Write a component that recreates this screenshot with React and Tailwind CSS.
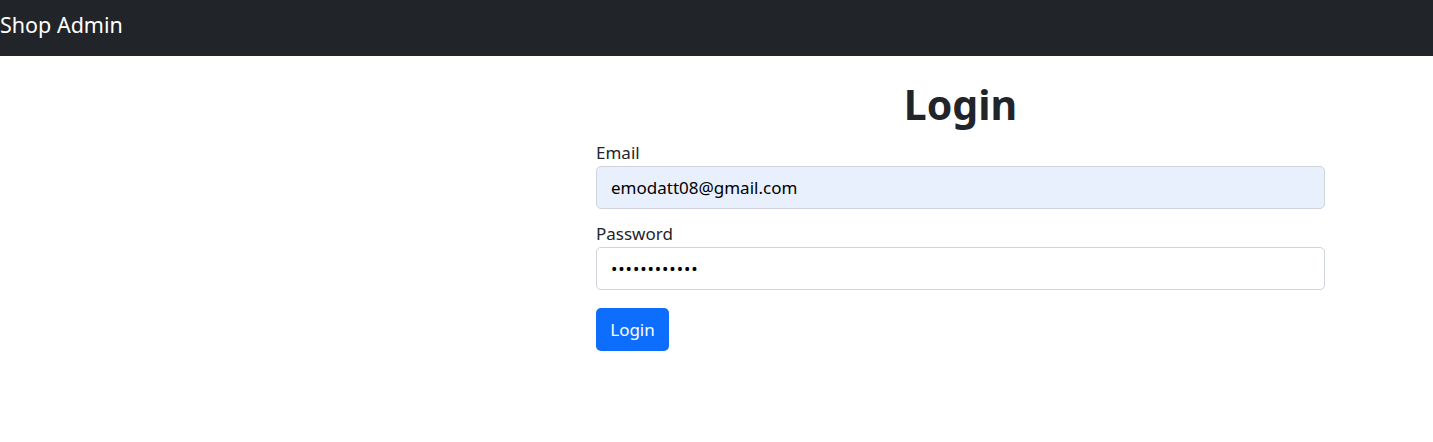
import React from "react";

const App = () => {
  return (
    <div className="min-h-screen bg-white text-[#212529]" style={{ fontFamily: '"Noto Sans", "Open Sans", sans-serif' }}>
      <nav className="h-[56px] bg-[#212529] flex items-center">
        <span className="text-white text-[21.5px] leading-none -mt-[7px]">Shop Admin</span>
      </nav>

      <div className="ml-[596px] w-[729px] pt-[22px]">
        <h1 className="text-center text-[41px] font-bold leading-[52px]">Login</h1>

        <form className="mt-[10px] flex flex-col" onSubmit={(e) => e.preventDefault()}>
          <label className="text-[17px] leading-[26px]">Email</label>
          <input
            type="email"
            defaultValue="emodatt08@gmail.com"
            className="h-[43px] w-full rounded-[5px] border border-[#ced4da] bg-[#e8f0fe] px-[14px] text-[17px] text-black outline-none"
          />

          <label className="mt-[12px] text-[17px] leading-[26px]">Password</label>
          <input
            type="password"
            defaultValue="password1234"
            className="h-[43px] w-full rounded-[5px] border border-[#ced4da] bg-white px-[14px] text-[17px] tracking-[0.9px] text-black outline-none"
          />

          <div className="mt-[18px]">
            <button
              type="submit"
              className="h-[43px] w-[73px] rounded-[5px] bg-[#0d6efd] text-[17px] text-white"
            >
              Login
            </button>
          </div>
        </form>
      </div>
    </div>
  );
};

export default App;
